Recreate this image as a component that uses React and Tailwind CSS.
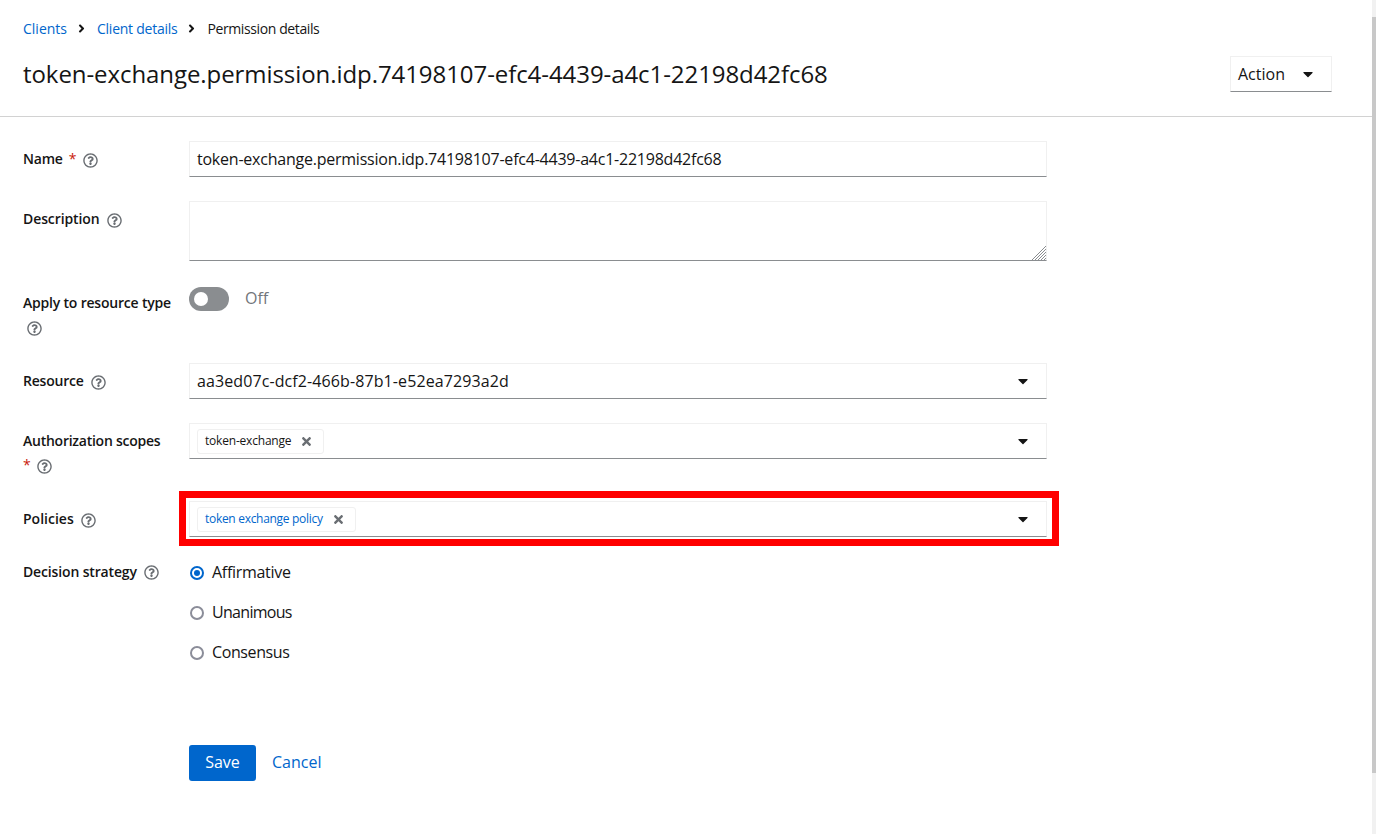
import { FaAngleRight, FaCaretDown, FaRegQuestionCircle, FaTimes } from 'react-icons/fa';

const Help = ({ className = "" }) => (
  <FaRegQuestionCircle className={`text-[15px] text-[#6a6e73] ${className}`} />
);

const Label = ({ children, required, className = "tracking-[-0.2px]" }) => (
  <div className={`flex items-center pt-[7px] text-[14px] leading-[21px] font-semibold text-[#151515] ${className}`}>
    {children}
    {required && <span className="ml-[6px] text-[#c9190b] font-normal">*</span>}
    <Help className="ml-[7px] mt-[3px]" />
  </div>
);

const Field = ({ children, className = "" }) => (
  <div className={`flex h-[36px] w-[858px] items-center border border-[#f0f0f0] border-b-[#8a8d90] bg-white pl-[7px] pr-[15px] ${className}`}>
    {children}
  </div>
);

const Chip = ({ children, blue }) => (
  <span className={`flex h-[25px] items-center rounded-[3px] border border-[#f0f0f0] pl-[7px] pr-[10px] text-[12px] ${blue ? "tracking-[-0.3px] text-[#06c]" : "tracking-[-0.2px] text-[#151515]"}`}>
    {children}
    <FaTimes className="ml-[9px] text-[13px] text-[#6a6e73]" />
  </span>
);

const Radio = ({ label, checked, className = "" }) => (
  <label className={`ml-[1px] flex h-[24px] items-center text-[16px] text-[#151515] ${className}`}>
    {checked ? (
      <span className="flex h-[14px] w-[14px] items-center justify-center rounded-full border-2 border-[#06c]">
        <span className="h-[6px] w-[6px] rounded-full bg-[#06c]" />
      </span>
    ) : (
      <span className="h-[14px] w-[14px] rounded-full border-2 border-[#8b8d99]" />
    )}
    <span className="ml-[8px] -mt-[2px]">{label}</span>
  </label>
);

const LabelCol = ({ children }) => <div className="w-[166px] shrink-0">{children}</div>;

const Row = ({ children, className = "" }) => <div className={`flex ${className}`}>{children}</div>;

export default function App() {
  return (
    <div className="relative h-[834px] overflow-hidden bg-white pr-1 font-['Open_Sans','Noto_Sans',sans-serif] text-[#151515]">
      {/* header */}
      <div className="h-[117px] border-b border-[#d2d2d2] pl-[23px] pr-[40px]">
        <nav className="flex items-center pt-[18px] text-[14px] leading-[21px]">
          <a href="#" className="text-[#06c]">Clients</a>
          <FaAngleRight className="ml-[7.5px] mr-[9.5px] text-[13px]" />
          <a href="#" className="tracking-[-0.25px] text-[#06c]">Client details</a>
          <FaAngleRight className="ml-[7.5px] mr-[9.5px] text-[13px]" />
          <span className="tracking-[-0.39px]">Permission details</span>
        </nav>
        <div className="mt-[16px] flex items-center justify-between">
          <h1 className="text-[24px] leading-[36px] font-normal tracking-[-0.07px]">token-exchange.permission.idp.74198107-efc4-4439-a4c1-22198d42fc68</h1>
          <div className="mt-[1px] flex h-[36px] w-[102px] items-center border border-[#f0f0f0] border-b-[#8a8d90] pl-[7px] text-[16px]">
            Action
            <FaCaretDown className="ml-[15px] text-[16px]" />
          </div>
        </div>
      </div>

      {/* form */}
      <form className="flex flex-col gap-6 pt-[24px] pl-[23px]">
        <Row>
          <LabelCol><Label required>Name</Label></LabelCol>
          <Field><span className="text-[16px] tracking-[-0.23px]">token-exchange.permission.idp.74198107-efc4-4439-a4c1-22198d42fc68</span></Field>
        </Row>
        <Row>
          <LabelCol><Label className="tracking-[-0.1px]">Description</Label></LabelCol>
          <div className="relative h-[60px] w-[858px] border border-[#f0f0f0] border-b-[#8a8d90]">
            <svg className="absolute right-0 bottom-0" width="15" height="15" viewBox="0 0 15 15" stroke="#8a8d90" fill="none">
              <path d="M1 15 15 1M4 15 15 4M7 15 15 7M10 15 15 10M13 15 15 13" />
            </svg>
          </div>
        </Row>
        <Row className="h-[54px]">
          <LabelCol>
            <div className="pt-[7px] text-[14px] leading-[21px] font-semibold tracking-[-0.2px]">Apply to resource type</div>
            <Help className="mt-[8px] ml-[4px]" />
          </LabelCol>
          <div className="flex items-start pt-[2px]">
            <span className="flex h-[24px] w-[40px] items-center rounded-full bg-[#8a8d90] pl-[5px]">
              <span className="h-[14px] w-[14px] rounded-full bg-white" />
            </span>
            <span className="ml-[16px] -mt-[1px] text-[16px] leading-[24px] text-[#72767b]">Off</span>
          </div>
        </Row>
        <Row>
          <LabelCol><Label>Resource</Label></LabelCol>
          <Field className="justify-between">
            <span className="text-[16px] tracking-[0.1px]">aa3ed07c-dcf2-466b-87b1-e52ea7293a2d</span>
            <FaCaretDown className="text-[16px]" />
          </Field>
        </Row>
        <Row className="h-[54px]">
          <LabelCol>
            <div className="pt-[7px] text-[14px] leading-[21px] font-semibold tracking-[-0.25px]">Authorization scopes</div>
            <div className="mt-[8px] flex items-center">
              <span className="-mt-[3px] text-[14px] leading-[14px] text-[#c9190b]">*</span>
              <Help className="ml-[6px]" />
            </div>
          </LabelCol>
          <Field className="justify-between">
            <Chip>token-exchange</Chip>
            <FaCaretDown className="text-[16px]" />
          </Field>
        </Row>
        <Row>
          <LabelCol><Label className="tracking-normal">Policies</Label></LabelCol>
          <Field className="justify-between">
            <Chip blue>token exchange policy</Chip>
            <FaCaretDown className="text-[16px]" />
          </Field>
        </Row>
        <Row>
          <LabelCol>
            <div className="flex items-center text-[14px] leading-[21px] font-semibold tracking-[-0.15px]">
              Decision strategy
              <Help className="ml-[7px] mt-[2px]" />
            </div>
          </LabelCol>
          <div className="flex flex-col gap-4">
            <Radio label="Affirmative" checked className="tracking-[-0.3px]" />
            <Radio label="Unanimous" className="tracking-[-0.7px]" />
            <Radio label="Consensus" className="tracking-[-0.4px]" />
          </div>
        </Row>
        <Row className="mt-[56px]">
          <LabelCol />
          <button type="button" className="h-[36px] w-[67px] rounded-[3px] bg-[#06c] pb-[2px] text-[16px] text-white">Save</button>
          <a href="#" className="ml-[16px] flex items-center pb-[2px] text-[16px] text-[#06c]">Cancel</a>
        </Row>
      </form>

      {/* red highlight drawn over the policies field */}
      <div className="pointer-events-none absolute top-[491px] left-[179px] h-[55px] w-[880px] border-[7px] border-[#ff0000]" />

      {/* window scrollbar */}
      <div className="absolute top-0 right-0 h-full w-[4px] bg-[#f1f1f1]">
        <div className="mt-[17px] h-[756px] bg-[#c8c8c8]" />
      </div>
    </div>
  );
}
